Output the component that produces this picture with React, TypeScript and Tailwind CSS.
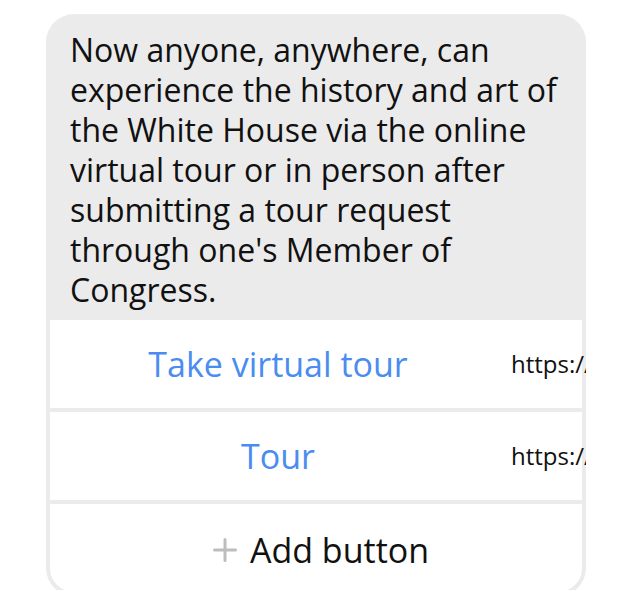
const buttons = [
  { label: 'Take virtual tour', url: 'https://www.whitehouse.gov/about-the-white-house/tours-and-events/' },
  { label: 'Tour', url: 'https://www.whitehouse.gov/about-the-white-house/tours-and-events/' }
];

function PlusIcon() {
  return (
    <svg width="24" height="24" viewBox="0 0 24 24" fill="none">
      <path d="M12 1.5v21M1.5 12h21" stroke="#bdbdbd" strokeWidth="3" strokeLinecap="round" />
    </svg>
  );
}

export default function App() {
  return (
    <div className="h-[590px] w-[624px] overflow-hidden bg-white pt-[14px] pl-[46px] font-['Open_Sans',sans-serif]">
      <div className="flex w-[540px] flex-col gap-1 overflow-hidden rounded-[28px] bg-[#ebebeb] p-1">
        <p className="px-5 pt-3 pb-[6px] text-[32px] leading-[40px] text-[#111]">
          Now anyone, anywhere, can experience the history and art of the White House via the online virtual tour or in
          person after submitting a tour request through one's Member of Congress.
        </p>
        {buttons.map((b) => (
          <div key={b.label} className="flex h-[88px] shrink-0 items-center bg-white">
            <div className="w-[456px] shrink-0 text-center text-[34px] text-[#4a8cf0]">{b.label}</div>
            <span className="ml-[5px] w-[75px] shrink-0 overflow-hidden text-[24px] whitespace-nowrap text-[#111]">
              {b.url}
            </span>
          </div>
        ))}
        <div className="flex h-[88px] shrink-0 items-center justify-center gap-[13px] rounded-b-[24px] bg-white pt-[4px] pl-[10px]">
          <PlusIcon />
          <span className="text-[34px] text-[#111]">Add button</span>
        </div>
      </div>
    </div>
  );
}
